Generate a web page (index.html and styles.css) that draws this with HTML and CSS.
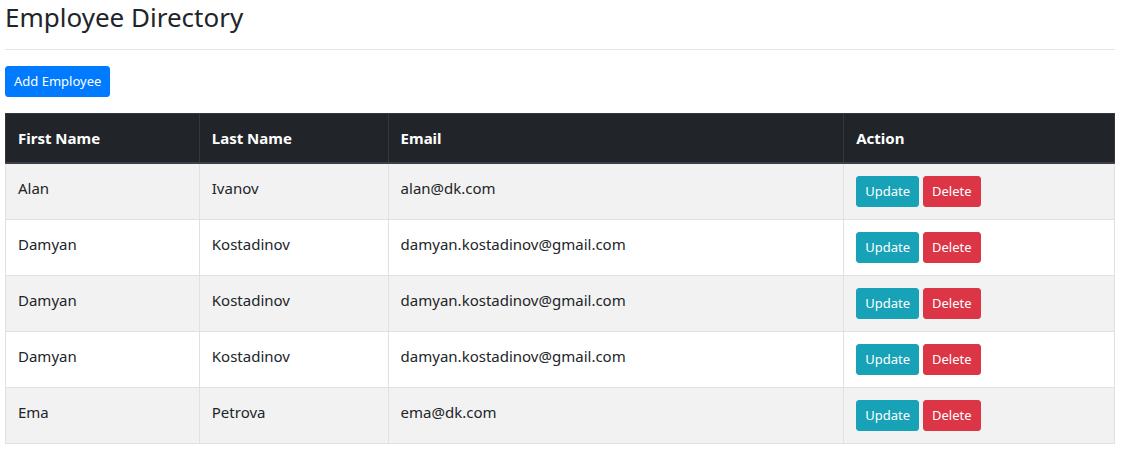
FILE: index.html
```html
<!DOCTYPE html>
<html lang="en">
<head>
<meta charset="utf-8">
<title>Employee Directory</title>
<link rel="stylesheet" href="styles.css">
</head>
<body>
<div class="page">
  <h2 class="title">Employee Directory</h2>
  <hr class="divider">
  <button class="btn btn-primary">Add Employee</button>
  <table class="table">
    <thead>
      <tr>
        <th class="col-first">First Name</th>
        <th class="col-last">Last Name</th>
        <th class="col-email">Email</th>
        <th class="col-action">Action</th>
      </tr>
    </thead>
    <tbody>
      <tr>
        <td>Alan</td><td>Ivanov</td><td>alan@dk.com</td>
        <td><div class="actions"><button class="btn btn-info">Update</button><button class="btn btn-danger">Delete</button></div></td>
      </tr>
      <tr>
        <td>Damyan</td><td>Kostadinov</td><td>damyan.kostadinov@gmail.com</td>
        <td><div class="actions"><button class="btn btn-info">Update</button><button class="btn btn-danger">Delete</button></div></td>
      </tr>
      <tr>
        <td>Damyan</td><td>Kostadinov</td><td>damyan.kostadinov@gmail.com</td>
        <td><div class="actions"><button class="btn btn-info">Update</button><button class="btn btn-danger">Delete</button></div></td>
      </tr>
      <tr>
        <td>Damyan</td><td>Kostadinov</td><td>damyan.kostadinov@gmail.com</td>
        <td><div class="actions"><button class="btn btn-info">Update</button><button class="btn btn-danger">Delete</button></div></td>
      </tr>
      <tr>
        <td>Ema</td><td>Petrova</td><td>ema@dk.com</td>
        <td><div class="actions"><button class="btn btn-info">Update</button><button class="btn btn-danger">Delete</button></div></td>
      </tr>
    </tbody>
  </table>
</div>
</body>
</html>
```
FILE: styles.css
```css
* { box-sizing: border-box; }

html, body {
  margin: 0;
  padding: 0;
  background: #fff;
}

body {
  font-family: "Noto Sans", "Open Sans", sans-serif;
  font-size: 15px;
  line-height: 24px;
  color: #212529;
}

.page {
  width: 1110px;
  margin-left: 5px;
  padding-top: 1px;
}

.title {
  margin: 0;
  font-size: 26px;
  font-weight: 400;
  line-height: 31px;
  padding-top: 1px;
  color: #212529;
}

.divider {
  margin: 16px 0;
  border: 0;
  border-top: 1px solid rgba(0, 0, 0, 0.1);
  height: 0;
}

.btn {
  display: inline-block;
  font-family: inherit;
  font-size: 13px;
  line-height: 21px;
  padding: 4px 8px;
  border: 1px solid transparent;
  border-radius: 3px;
  color: #fff;
  cursor: pointer;
  vertical-align: top;
}

.btn-primary { background: #007bff; border-color: #007bff; }
.btn-info { background: #17a2b8; border-color: #17a2b8; }
.btn-danger { background: #dc3545; border-color: #dc3545; }

.table {
  display: table;
  margin-top: 16px;
  width: 1110px;
  border-collapse: collapse;
  border: 1px solid #dee2e6;
}

.table th {
  background: #212529;
  color: #fff;
  text-align: left;
  font-weight: 700;
  padding: 12px;
  border: 1px solid #32383e;
  border-bottom: 2px solid #3b4147;
  vertical-align: bottom;
}

.table td {
  padding: 12px;
  border: 1px solid #dee2e6;
  vertical-align: top;
}

.table tbody tr:nth-child(odd) td {
  background: #f2f2f2;
}

.col-first { width: 194px; }
.col-last { width: 189px; }
.col-email { width: 456px; }
.col-action { width: 271px; }

.actions {
  display: flex;
  gap: 4px;
}
```
